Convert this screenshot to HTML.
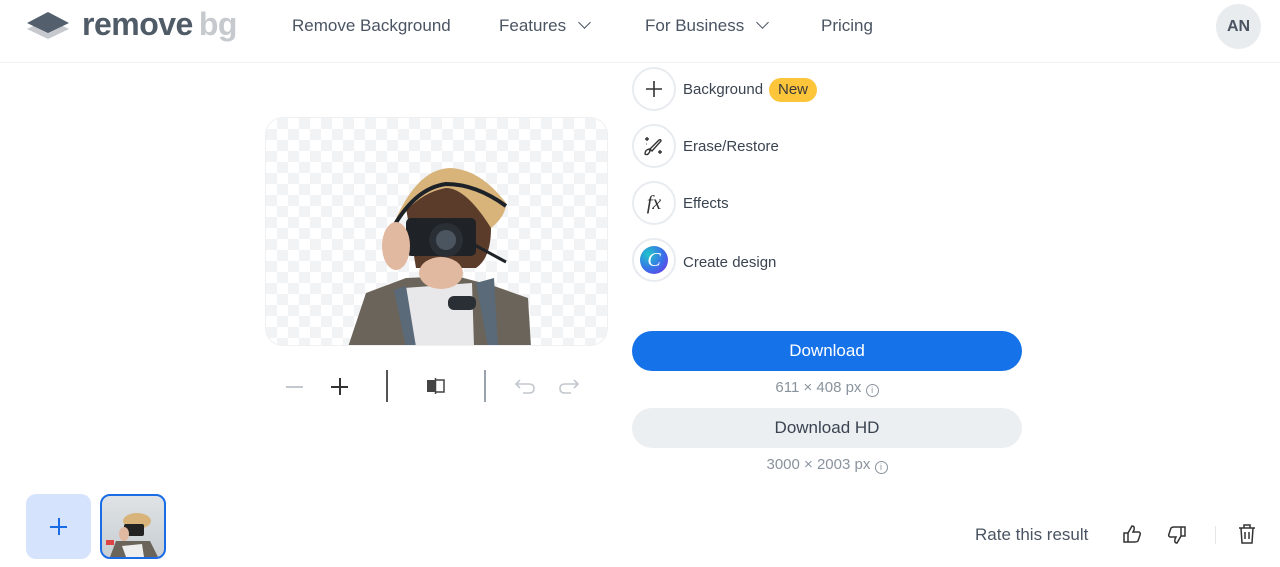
<!DOCTYPE html>
<html><head><meta charset="utf-8"><style>
*{margin:0;padding:0;box-sizing:border-box}
body{width:1280px;height:567px;background:#fff;font-family:"Liberation Sans",sans-serif;color:#454f5b;position:relative;overflow:hidden}
.a{position:absolute}
.nav{font-size:17px;color:#4a5462;top:16px}
.circ{position:absolute;left:632px;width:44px;height:44px;border-radius:50%;border:2px solid #e8ebef;background:#fff;display:flex;align-items:center;justify-content:center}
.lbl{position:absolute;left:683px;font-size:15px;color:#3a4350}
.chev{display:inline-block;width:9px;height:9px;border-right:1.6px solid #4a5462;border-bottom:1.6px solid #4a5462;transform:rotate(45deg);margin-left:14px;position:relative;top:-4px}
</style></head><body>
<!-- header -->
<svg class="a" style="left:25px;top:10px" width="46" height="32" viewBox="0 0 46 32"><path d="M2 19 L23 29 L44 19 L23 9Z" fill="#c6c9cd"/><path d="M2 13 L23 23 L44 13 L23 2Z" fill="#535f6c"/></svg>
<div class="a" style="left:82px;top:6px;font-size:32px;font-weight:bold;color:#4f5b67;letter-spacing:-0.5px">remove<span style="color:#c6c9cd;margin-left:6px">bg</span></div>
<div class="a nav" style="left:292px">Remove Background</div>
<div class="a nav" style="left:499px">Features<span class="chev"></span></div>
<div class="a nav" style="left:645px">For Business<span class="chev"></span></div>
<div class="a nav" style="left:821px">Pricing</div>
<div class="a" style="left:1216px;top:4px;width:45px;height:45px;border-radius:50%;background:#e9ecef;font-size:16px;font-weight:bold;color:#4a5462;display:flex;align-items:center;justify-content:center">AN</div>
<div class="a" style="left:0;top:62px;width:1280px;height:1px;background:#eef0f2"></div>

<!-- image -->
<div class="a" style="left:265px;top:117px;width:343px;height:229px;border-radius:18px;overflow:hidden;border:1px solid #eef0f2;background-color:#fff;background-image:linear-gradient(45deg,#f1f3f4 25%,transparent 25%,transparent 75%,#f1f3f4 75%),linear-gradient(45deg,#f1f3f4 25%,transparent 25%,transparent 75%,#f1f3f4 75%);background-size:22px 22px;background-position:0 0,11px 11px">
<svg width="343" height="229" viewBox="0 0 343 229">
<path d="M82 229 L100 175 L140 160 L190 158 L228 168 L262 180 L265 229Z" fill="#6b645a"/>
<path d="M138 170 L150 229 L208 229 L206 165Z" fill="#e8e8ea"/>
<path d="M128 172 L140 229 L150 229 L140 168Z M210 165 L222 229 L232 229 L228 160Z" fill="#5a6a78"/>
<path d="M140 90 Q150 65 185 70 Q220 80 225 110 Q225 140 210 150 L150 150Z" fill="#5b3b2a"/>
<path d="M126 110 Q150 50 185 50 Q215 52 240 85 Q240 98 225 110 Q200 70 180 70 Q150 75 126 110Z" fill="#d8b47a"/>
<path d="M128 108 Q150 70 180 66 Q210 66 240 88" stroke="#1d2228" stroke-width="4" fill="none"/>
<rect x="140" y="100" width="70" height="38" rx="5" fill="#1f2327"/>
<circle cx="180" cy="122" r="17" fill="#2a2f35"/><circle cx="180" cy="122" r="10" fill="#4b5560"/>
<path d="M205 125 L240 144" stroke="#1f2327" stroke-width="3"/>
<ellipse cx="130" cy="128" rx="14" ry="24" fill="#e1b8a0"/>
<ellipse cx="175" cy="155" rx="22" ry="16" fill="#e1b8a0"/>
<rect x="182" y="178" width="28" height="14" rx="6" fill="#2a2f35"/>
</svg></div>

<!-- toolbar -->
<div class="a" style="left:286px;top:386px;width:17px;height:1.5px;background:#c3c8ce"></div>
<div class="a" style="left:331px;top:386px;width:17px;height:1.6px;background:#333"></div>
<div class="a" style="left:339px;top:378px;width:1.6px;height:17px;background:#333"></div>
<div class="a" style="left:386px;top:370px;width:1.5px;height:32px;background:#555"></div>
<svg class="a" style="left:426px;top:377px" width="20" height="18" viewBox="0 0 20 18"><rect x="1" y="3" width="8" height="12" fill="#444"/><path d="M10 3 H18 V15 H10" stroke="#444" stroke-width="1.5" fill="none"/><path d="M9.5 1 V17" stroke="#444" stroke-width="1.5"/></svg>
<div class="a" style="left:484px;top:370px;width:1.5px;height:32px;background:#9aa3ab"></div>
<svg class="a" style="left:514px;top:376px" width="68" height="20" viewBox="0 0 68 20" fill="none" stroke="#c3c8ce" stroke-width="1.6"><path d="M6 4 L2 8 L6 12 M2 8 H15 Q20 8 20 12.5 Q20 17 15 17 H9"/><path d="M60 4 L64 8 L60 12 M64 8 H51 Q46 8 46 12.5 Q46 17 51 17 H57"/></svg>

<!-- tools -->
<div class="circ" style="top:67px"><svg width="20" height="20"><path d="M10 2 V18 M2 10 H18" stroke="#333" stroke-width="1.6"/></svg></div>
<div class="lbl" style="top:81px">Background</div>
<div class="a" style="left:769px;top:78px;width:48px;height:24px;border-radius:12px;background:#fdc53a;font-size:15px;color:#3a3a3a;text-align:center;line-height:24px">New</div>
<div class="circ" style="top:124px"><svg width="24" height="24" viewBox="0 0 24 24" fill="none" stroke="#333" stroke-width="1.4"><path d="M8 17 Q6 22 3 20 Q3 16 7 15Z M8 15 L17 6 Q19 5 19 7 L10 17Z"/><path d="M5 3 V7 M3 5 H7 M18 16 V20 M16 18 H20 M4 10 H4.5"/></svg></div>
<div class="lbl" style="top:138px">Erase/Restore</div>
<div class="circ" style="top:181px;font-family:'Liberation Serif',serif;font-style:italic;font-size:20px;color:#333">fx</div>
<div class="lbl" style="top:195px">Effects</div>
<div class="circ" style="top:238px"><div style="width:28px;height:28px;border-radius:50%;background:radial-gradient(circle at 30% 30%,#20c4cb,#3a6ee8 55%,#7d2ae8);color:#fff;font-family:'Liberation Serif',serif;font-style:italic;font-size:20px;display:flex;align-items:center;justify-content:center">C</div></div>
<div class="lbl" style="top:254px">Create design</div>

<!-- download -->
<div class="a" style="left:632px;top:331px;width:390px;height:40px;border-radius:20px;background:#1572e8;color:#fff;font-size:17px;text-align:center;line-height:40px">Download</div>
<div class="a" style="left:632px;top:379px;width:390px;text-align:center;font-size:15px;color:#8a939d">611 × 408 px <span style="display:inline-block;width:13px;height:13px;border:1.3px solid #8a939d;border-radius:50%;font-size:9px;line-height:11px;vertical-align:-1px">i</span></div>
<div class="a" style="left:632px;top:408px;width:390px;height:40px;border-radius:20px;background:#eceff2;color:#3a4350;font-size:17px;text-align:center;line-height:40px">Download HD</div>
<div class="a" style="left:632px;top:456px;width:390px;text-align:center;font-size:15px;color:#8a939d">3000 × 2003 px <span style="display:inline-block;width:13px;height:13px;border:1.3px solid #8a939d;border-radius:50%;font-size:9px;line-height:11px;vertical-align:-1px">i</span></div>

<!-- bottom -->
<div class="a" style="left:26px;top:494px;width:65px;height:65px;border-radius:10px;background:#d6e3fd"></div>
<div class="a" style="left:50px;top:526px;width:17px;height:1.6px;background:#1a6be6"></div>
<div class="a" style="left:58px;top:518px;width:1.6px;height:17px;background:#1a6be6"></div>
<div class="a" style="left:100px;top:494px;width:66px;height:65px;border-radius:10px;border:2px solid #1a6be6;overflow:hidden;background:linear-gradient(#dfe3e6,#c8ced2)">
<svg width="62" height="61" viewBox="0 0 62 61"><path d="M8 61 L14 45 L48 45 L56 61Z" fill="#6b645a"/><path d="M20 50 L24 61 L42 61 L40 48Z" fill="#eee"/><ellipse cx="35" cy="25" rx="14" ry="8" fill="#d8b47a"/><rect x="22" y="28" width="20" height="12" rx="2" fill="#222"/><ellipse cx="22" cy="38" rx="5" ry="7" fill="#e1b8a0"/><rect x="4" y="44" width="8" height="5" fill="#d44"/></svg></div>
<div class="a" style="left:975px;top:525px;font-size:17px;color:#4a5462">Rate this result</div>
<svg class="a" style="left:1122px;top:524px" width="20" height="20" viewBox="0 0 20 20" fill="none" stroke="#333" stroke-width="1.5"><path d="M2 9 H6 V18 H2Z M6 9 L10 2 Q13 2 12 6 L11 8 H17 Q19 9 18 11 L16 17 Q15 18 13 18 H6"/></svg>
<svg class="a" style="left:1167px;top:525px" width="20" height="20" viewBox="0 0 20 20" fill="none" stroke="#333" stroke-width="1.5"><path d="M18 11 H14 V2 H18Z M14 11 L10 18 Q7 18 8 14 L9 12 H3 Q1 11 2 9 L4 3 Q5 2 7 2 H14"/></svg>
<div class="a" style="left:1215px;top:526px;width:1px;height:18px;background:#e4e7ea"></div>
<svg class="a" style="left:1237px;top:523px" width="20" height="22" viewBox="0 0 20 22" fill="none" stroke="#333" stroke-width="1.5"><path d="M2 5 H18 M7 5 V2 H13 V5 M4 5 L5 20 H15 L16 5 M8 9 V16 M12 9 V16"/></svg>
</body></html>
